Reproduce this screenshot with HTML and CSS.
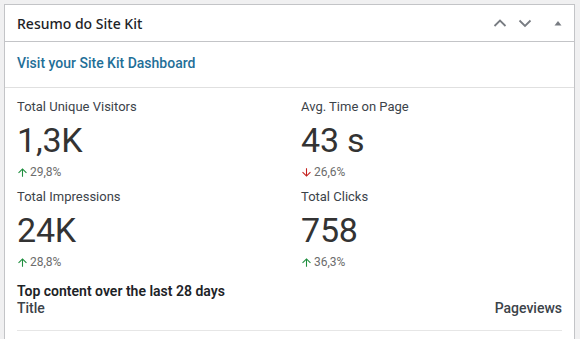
FILE: index.html
```html
<!DOCTYPE html>
<html lang="pt">
<head>
<meta charset="utf-8">
<title>Resumo do Site Kit</title>
<link rel="stylesheet" href="styles.css">
</head>
<body>
<div class="card">
  <div class="card-head">
    <h2 class="card-title">Resumo do Site Kit</h2>
    <div class="head-actions">
      <span class="hbtn"><svg width="14" height="14" viewBox="0 0 14 14"><path d="M1.5 10 L7 4.5 L12.5 10" fill="none" stroke="#787c82" stroke-width="1.8"/></svg></span>
      <span class="hbtn"><svg width="14" height="14" viewBox="0 0 14 14"><path d="M1.5 4.5 L7 10 L12.5 4.5" fill="none" stroke="#787c82" stroke-width="1.8"/></svg></span>
      <span class="hbtn tri"><svg width="10" height="10" viewBox="0 0 10 10"><path d="M1.5 7.5 L5 3 L8.5 7.5 Z" fill="#787c82"/></svg></span>
    </div>
  </div>
  <div class="link-row"><a class="dash-link" href="#">Visit your Site Kit Dashboard</a></div>
  <div class="body">
    <div class="metrics">
      <div class="metric">
        <div class="m-label">Total Unique Visitors</div>
        <div class="m-value">1,3K</div>
        <div class="m-change"><svg class="arr" width="13" height="13" viewBox="0 0 24 24"><path d="M4 12l1.41 1.41L11 7.83V20h2V7.83l5.58 5.59L20 12l-8-8-8 8z" fill="#1e8e3e"/></svg>29,8%</div>
      </div>
      <div class="metric">
        <div class="m-label">Avg. Time on Page</div>
        <div class="m-value">43 s</div>
        <div class="m-change"><svg class="arr" width="13" height="13" viewBox="0 0 24 24"><path d="M20 12l-1.41-1.41L13 16.17V4h-2v12.17l-5.58-5.59L4 12l8 8 8-8z" fill="#c5221f"/></svg>26,6%</div>
      </div>
      <div class="metric">
        <div class="m-label">Total Impressions</div>
        <div class="m-value">24K</div>
        <div class="m-change"><svg class="arr" width="13" height="13" viewBox="0 0 24 24"><path d="M4 12l1.41 1.41L11 7.83V20h2V7.83l5.58 5.59L20 12l-8-8-8 8z" fill="#1e8e3e"/></svg>28,8%</div>
      </div>
      <div class="metric">
        <div class="m-label">Total Clicks</div>
        <div class="m-value">758</div>
        <div class="m-change"><svg class="arr" width="13" height="13" viewBox="0 0 24 24"><path d="M4 12l1.41 1.41L11 7.83V20h2V7.83l5.58 5.59L20 12l-8-8-8 8z" fill="#1e8e3e"/></svg>36,3%</div>
      </div>
    </div>
    <h3 class="top-title">Top content over the last 28 days</h3>
    <div class="table-head">
      <span>Title</span>
      <span>Pageviews</span>
    </div>
  </div>
</div>
</body>
</html>
```
FILE: styles.css
```css
html, body {
  margin: 0;
  padding: 0;
  background: #f0f0f1;
}
body {
  padding: 4px 5px 0 4px;
  font-family: Roboto, "Liberation Sans", sans-serif;
  color: #3c434a;
}
.card {
  background: #fff;
  border: 1px solid #c3c4c7;
  border-bottom: none;
  min-height: 340px;
  box-sizing: border-box;
}
.card-head {
  height: 36px;
  border-bottom: 1px solid #c3c4c7;
  display: flex;
  align-items: center;
  justify-content: space-between;
  padding: 0 12px;
}
.card-title {
  margin: 0;
  font-family: "Noto Sans", "Open Sans", sans-serif;
  font-size: 14px;
  font-weight: 500;
  color: #1d2327;
}
.head-actions {
  display: flex;
  align-items: center;
  margin-right: -1px;
}
.hbtn {
  display: flex;
  align-items: center;
  justify-content: center;
  width: 25px;
  height: 24px;
}
.hbtn.tri {
  width: 26px;
  justify-content: flex-end;
  padding-right: 0;
}
.link-row {
  height: 46px;
  display: flex;
  align-items: center;
  padding: 0 12px 3px;
  box-sizing: border-box;
  border-bottom: 1px solid #e0e0e0;
}
.dash-link {
  color: #1f6f98;
  font-size: 14px;
  font-weight: 500;
  text-decoration: none;
}
.body {
  padding: 10px 12px 0;
}
.metrics {
  display: grid;
  grid-template-columns: 284px 1fr;
  row-gap: 6px;
}
.metric {
  display: flex;
  flex-direction: column;
}
.m-label {
  font-size: 13px;
  line-height: 18px;
  margin-bottom: 1px;
  color: #3c434a;
}
.m-value {
  font-size: 34px;
  line-height: 46px;
  color: #333;
  letter-spacing: -0.2px;
}
.m-change {
  font-size: 12px;
  line-height: 19px;
  color: #6c6c6c;
  display: flex;
  align-items: center;
}
.arr {
  margin-left: -1px;
  margin-right: 1px;
}
.top-title {
  margin: 11px 0 0;
  font-size: 14px;
  font-weight: 600;
  line-height: 17px;
  color: #1d2327;
}
.table-head {
  display: flex;
  justify-content: space-between;
  font-size: 14px;
  font-weight: 500;
  color: #3c434a;
  line-height: 17px;
  padding-bottom: 13px;
  border-bottom: 1px solid #e6e6e6;
}
```
